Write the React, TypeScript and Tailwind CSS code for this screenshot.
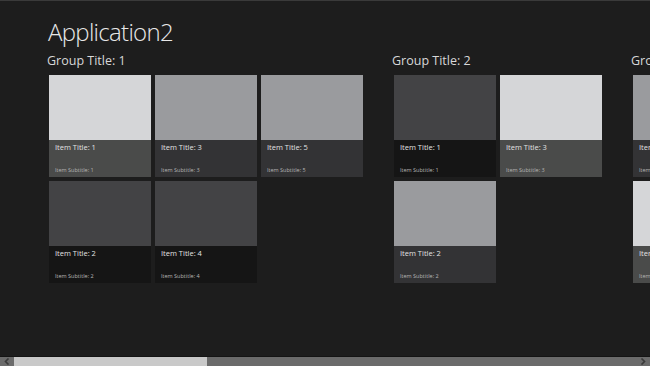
import React from "react";

type Item = { title: string; subtitle: string; img: string; foot: string };

const L = { img: "bg-[#d5d6d8]", foot: "bg-[#4a4b4a]" };
const M = { img: "bg-[#9a9b9e]", foot: "bg-[#333335]" };
const D = { img: "bg-[#434345]", foot: "bg-[#151515]" };

const groups: { title: string; items: Item[] }[] = [
  {
    title: "Group Title: 1",
    items: [
      { title: "Item Title: 1", subtitle: "Item Subtitle: 1", ...L },
      { title: "Item Title: 2", subtitle: "Item Subtitle: 2", ...D },
      { title: "Item Title: 3", subtitle: "Item Subtitle: 3", ...M },
      { title: "Item Title: 4", subtitle: "Item Subtitle: 4", ...D },
      { title: "Item Title: 5", subtitle: "Item Subtitle: 5", ...M },
    ],
  },
  {
    title: "Group Title: 2",
    items: [
      { title: "Item Title: 1", subtitle: "Item Subtitle: 1", ...D },
      { title: "Item Title: 2", subtitle: "Item Subtitle: 2", ...M },
      { title: "Item Title: 3", subtitle: "Item Subtitle: 3", ...L },
    ],
  },
  {
    title: "Group Title: 3",
    items: [
      { title: "Item Title: 1", subtitle: "Item Subtitle: 1", ...M },
      { title: "Item Title: 2", subtitle: "Item Subtitle: 2", ...L },
    ],
  },
];

function Tile({ item }: { item: Item }) {
  return (
    <div className="w-[102px] h-[102px] flex flex-col">
      <div className={`h-[65px] ${item.img}`} />
      <div className={`flex-1 flex flex-col justify-between px-[6px] pt-[4px] pb-[3px] ${item.foot}`}>
        <div className="text-[7.5px] leading-none text-[#e2e2e2] whitespace-nowrap">{item.title}</div>
        <div className="text-[5.5px] leading-none text-[#b5b5b5] whitespace-nowrap">{item.subtitle}</div>
      </div>
    </div>
  );
}

export default function App() {
  return (
    <div
      className="w-[650px] h-[366px] bg-[#1d1d1d] flex flex-col overflow-hidden border-t border-[#3a3a3a]"
      style={{ fontFamily: '"Open Sans", "Noto Sans", sans-serif' }}
    >
      <div className="flex-1 overflow-hidden">
        <div className="pl-[48px] pt-[19px]">
          <h1 className="text-[24px] leading-none font-light text-[#e8e8e8] tracking-[-0.7px]">Application2</h1>
        </div>
        <div className="flex gap-[31px] pl-[49px] pt-[11px]">
          {groups.map((g) => (
            <div key={g.title} className="flex flex-col shrink-0">
              <div className="text-[12.5px] leading-none text-[#d8d8d8] -ml-[2px] whitespace-nowrap">{g.title}</div>
              <div className="grid grid-flow-col grid-rows-2 auto-cols-[102px] gap-[4px] mt-[7px]">
                {g.items.map((it) => (
                  <Tile key={it.title} item={it} />
                ))}
              </div>
            </div>
          ))}
        </div>
      </div>
      <div className="h-[1px] bg-[#141414]" />
      <div className="h-[9px] bg-[#6b6b6b] flex items-center">
        <div className="w-[14px] flex items-center justify-center">
          <svg width="6" height="7" viewBox="0 0 6 7">
            <path d="M4.5 0.5 L1.5 3.5 L4.5 6.5" fill="none" stroke="#3a3a3a" strokeWidth="1.6" />
          </svg>
        </div>
        <div className="w-[193px] h-[9px] bg-[#c9c9c9]" />
        <div className="flex-1" />
        <div className="w-[14px] flex items-center justify-center">
          <svg width="6" height="7" viewBox="0 0 6 7">
            <path d="M1.5 0.5 L4.5 3.5 L1.5 6.5" fill="none" stroke="#3a3a3a" strokeWidth="1.6" />
          </svg>
        </div>
      </div>
    </div>
  );
}
